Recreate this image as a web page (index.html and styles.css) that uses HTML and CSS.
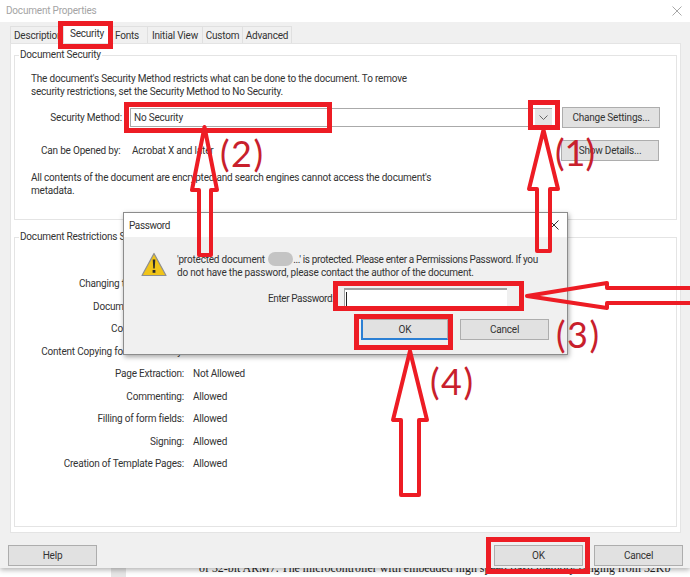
FILE: index.html
```html
<!DOCTYPE html>
<html lang="en">
<head>
<meta charset="utf-8">
<title>Document Properties</title>
<link rel="stylesheet" href="styles.css">
</head>
<body>
<div class="backdrop-text">of 32-bit ARM7. The microcontroller with embedded high speed flash memory ranging from 32Kb</div>
<div class="backdrop-bar"></div>
<main class="window">
  <header class="titlebar">
    <span class="title">Document Properties</span>
    <svg class="close" width="10" height="10" viewBox="0 0 10 10"><path d="M.5.5l9 9M9.5.5l-9 9" stroke="#a8a8a8" fill="none"/></svg>
  </header>
  <div class="body">
    <nav class="tabs">
      <span class="tab t-desc">Description</span>
      <span class="tab active">Security</span>
      <span class="tab t-fonts">Fonts</span>
      <span class="tab t-init">Initial View</span>
      <span class="tab t-cust">Custom</span>
      <span class="tab t-adv">Advanced</span>
    </nav>
    <section class="panel">
      <fieldset class="group sec">
        <legend>Document Security</legend>
        <div class="sec-inner">
          <p class="para">The document's Security Method restricts what can be done to the document. To remove<br>security restrictions, set the Security Method to No Security.</p>
          <div class="method-row">
            <span class="mlabel">Security Method:</span>
            <div class="select"><span>No Security</span><span class="arrowbox"><svg width="9" height="5" viewBox="0 0 9 5"><path d="M.5.5l4 4 4-4" stroke="#666" fill="none"/></svg></span></div>
            <span class="btn b-change">Change Settings...</span>
          </div>
          <div class="open-row">
            <span class="olabel">Can be Opened by:</span>
            <span class="oval">Acrobat X and later</span>
            <span class="btn b-show">Show Details...</span>
          </div>
          <p class="para p2">All contents of the document are encrypted and search engines cannot access the document's<br>metadata.</p>
        </div>
      </fieldset>
      <fieldset class="group res">
        <legend>Document Restrictions Summary</legend>
        <dl class="rows">
          <dt>Printing:</dt><dd>Allowed</dd>
          <dt>Changing the Document:</dt><dd>Not Allowed</dd>
          <dt>Document Assembly:</dt><dd>Not Allowed</dd>
          <dt>Content Copying:</dt><dd>Not Allowed</dd>
          <dt>Content Copying for Accessibility:</dt><dd>Not Allowed</dd>
          <dt>Page Extraction:</dt><dd>Not Allowed</dd>
          <dt>Commenting:</dt><dd>Allowed</dd>
          <dt>Filling of form fields:</dt><dd>Allowed</dd>
          <dt>Signing:</dt><dd>Allowed</dd>
          <dt>Creation of Template Pages:</dt><dd>Allowed</dd>
        </dl>
      </fieldset>
    </section>
    <footer class="footer">
      <span class="btn b-foot">Help</span>
      <span class="spacer"></span>
      <span class="btn b-foot">OK</span>
      <span class="btn b-foot">Cancel</span>
    </footer>
  </div>
</main>

<div class="dialog">
  <header class="dtitle">
    <span class="dname">Password</span>
    <svg class="dclose" width="10" height="10" viewBox="0 0 10 10"><path d="M.5.5l9 9M9.5.5l-9 9" stroke="#333" fill="none"/></svg>
  </header>
  <div class="dbody">
    <div class="dmsg">
      <svg class="warn" width="26" height="25" viewBox="0 0 26 25">
        <path d="M13 1.500L25 23.500H1z" fill="#f0c419" stroke="#8f8f8f" stroke-width="1.200" stroke-linejoin="round"/>
        <path d="M11.700 7.500h2.600l-.6 9h-1.400z" fill="#2b2b2b"/>
        <rect x="11.600" y="18" width="2.800" height="2.800" fill="#2b2b2b"/>
      </svg>
      <p>'protected document <span class="blur"></span><span class="tail">...' is protected. Please enter a Permissions Password. If you</span><br>do not have the password, please contact the author of the document.</p>
    </div>
    <div class="pw-row"><label>Enter Password:</label><div class="pw-input"><i class="caret"></i></div></div>
    <div class="dbtns"><span class="btn d-ok">OK</span><span class="btn d-cancel">Cancel</span></div>
  </div>
</div>

<svg class="marks" width="690" height="577" viewBox="0 0 690 577">
  <g fill="none" stroke="#ed1c24" stroke-width="5">
    <rect x="60.500" y="23.500" width="50" height="23"/>
    <rect x="126.500" y="104.500" width="203" height="26"/>
    <rect x="530.500" y="102.500" width="27" height="25"/>
    <rect x="335.500" y="283.500" width="186" height="25"/>
    <rect x="356.500" y="316.500" width="94" height="31"/>
    <rect x="488.500" y="539.500" width="99" height="32"/>
  </g>
  <g fill="none" stroke="#ed1c24" stroke-width="4" stroke-linejoin="round">
    <path d="M543.500 130L529 189H537V251H550V189H558Z"/>
    <path d="M204.500 127L192 190H199V255H211V190H217Z"/>
    <path d="M692 288H607V283L527 296L607 308V303H692"/>
    <path d="M410 351L393 420H401V495H419V420H427Z"/>
  </g>
</svg>
<span class="num n1">(1)</span>
<span class="num n2">(2)</span>
<span class="num n3">(3)</span>
<span class="num n4">(4)</span>
</body>
</html>
```
FILE: styles.css
```css
* { box-sizing: border-box; }
html, body { margin: 0; padding: 0; }
body {
  width: 690px;
  height: 577px;
  position: relative;
  overflow: hidden;
  background: #fff;
  font-family: Roboto, "Open Sans", sans-serif;
  font-size: 10px;
  letter-spacing: -.2px;
  color: #333;
}
.backdrop-text {
  position: absolute;
  left: 199px;
  top: 560px;
  font: 11.900px/16px "Liberation Serif", serif;
  letter-spacing: 0;
  color: #222;
  white-space: nowrap;
}
.backdrop-bar {
  position: absolute;
  left: 111px;
  top: 568px;
  width: 15px;
  height: 9px;
  background: #e6e6e6;
}
.window {
  position: relative;
  width: 690px;
  height: 568px;
  display: flex;
  flex-direction: column;
  box-shadow: 0 2px 5px rgba(0,0,0,.3);
}
.titlebar {
  height: 22px;
  flex: none;
  background: #fff;
  display: flex;
  align-items: center;
  justify-content: space-between;
  padding: 0 8px 1px 6px;
}
.title { color: #a4a4a4; }
.body {
  flex: 1;
  min-height: 0;
  background: #f0f0f0;
  display: flex;
  flex-direction: column;
  padding: 4px 7px 0 8px;
}
.tabs {
  display: flex;
  height: 17px;
  flex: none;
  padding-left: 2px;
}
.tab {
  height: 17px;
  line-height: 17px;
  background: #f0f0f0;
  border: 1px solid #e0e0e0;
  border-bottom: none;
  margin-right: -1px;
  white-space: nowrap;
  text-align: center;
}
.tab.active { background: #fff; width: 48px; height: 19px; margin-top: -2px; }
.t-desc { width: 54px; text-align: left; padding-left: 3px; overflow: hidden; }
.t-fonts { width: 38px; text-align: left; padding-left: 4px; }
.t-init { width: 56px; }
.t-cust { width: 41px; }
.t-adv { width: 50px; }
.panel {
  flex: none;
  height: 490px;
  margin: 0 2px 0 2px;
  background: #fff;
  border: 1px solid #e4e4e4;
  padding: 0 3px;
  display: flex;
  flex-direction: column;
}
.group {
  margin: 0;
  padding: 0;
  border: 1px solid #e4e4e4;
  min-width: 0;
}
.group legend { margin-left: 4px; padding: 0 1px; color: #333; line-height: 14px; }
.sec { height: 172px; margin-top: 4px; flex: none; }
.sec-inner { padding: 10px 0 0 16px; }
.res { flex: 1; margin-top: 10px; margin-bottom: 5px; }
.para { margin: 0; line-height: 13px; }
.method-row, .open-row { display: flex; align-items: center; height: 21px; }
.method-row { margin-top: 9px; }
.mlabel { width: 99px; padding-right: 8px; text-align: right; white-space: nowrap; }
.select {
  width: 422px;
  height: 19px;
  border: 1px solid #aaa;
  border-width: 1px 0 1px 1px;
  background: #fff;
  display: flex;
  align-items: center;
  justify-content: space-between;
  padding-left: 3px;
}
.arrowbox {
  width: 17px;
  height: 18px;
  background: #e4e4e4;
  display: flex;
  align-items: center;
  justify-content: center;
}
.btn {
  display: inline-flex;
  align-items: center;
  justify-content: center;
  background: #e1e1e1;
  border: 1px solid #adadad;
  white-space: nowrap;
  color: #333;
}
.b-change { width: 98px; height: 21px; margin-left: 10px; }
.b-show { width: 98px; height: 21px; margin-left: auto; margin-right: 17px; }
.open-row { margin-top: 12px; }
.olabel { width: 101px; padding-left: 10px; white-space: nowrap; }
.oval { white-space: nowrap; }
.p2 { margin-top: 10px; }
.rows {
  margin: 0;
  padding: 6px 0 0 0;
  display: grid;
  grid-template-columns: 169px 1fr;
  column-gap: 9px;
  grid-auto-rows: 22.500px;
  align-items: center;
}
.rows dt { text-align: right; white-space: nowrap; }
.rows dd { margin: 0; }
.footer {
  flex: 1;
  display: flex;
  align-items: flex-start;
  gap: 11px;
  padding-top: 12px;
}
.spacer { flex: 1; }
.b-foot { width: 89px; height: 21px; }
.dialog {
  position: absolute;
  left: 123px;
  top: 212px;
  width: 445px;
  height: 143px;
  background: #f0f0f0;
  border: 1px solid #8c8c8c;
  box-shadow: 1px 2px 5px rgba(0,0,0,.35);
  display: flex;
  flex-direction: column;
}
.dtitle {
  height: 24px;
  flex: none;
  background: #fff;
  display: flex;
  align-items: center;
  justify-content: space-between;
  padding: 0 8px 0 5px;
}
.dname { letter-spacing: -.4px; }
.dbody { flex: 1; display: flex; flex-direction: column; }
.dmsg { display: flex; padding: 15px 0 0 17px; gap: 10px; }
.dmsg p { margin: 0; line-height: 13px; white-space: nowrap; }
.warn { flex: none; }
.blur {
  display: inline-block;
  width: 25px;
  height: 14px;
  margin-left: 1px;
  border-radius: 7px;
  background: #c4c4c4;
  vertical-align: -3px;
}
.tail { letter-spacing: -.35px; }
.pw-row { display: flex; align-items: center; margin-top: 9px; padding-left: 144px; }
.pw-row label { white-space: nowrap; width: 76px; letter-spacing: -.4px; }
.pw-input {
  width: 163px;
  height: 20px;
  background: #fff;
  border-top: 2px solid #a0a0a0;
  border-left: 1px solid #a0a0a0;
  display: flex;
  align-items: center;
  padding-left: 1px;
}
.caret { display: block; width: 1px; height: 14px; background: #222; }
.dbtns { display: flex; margin-top: 11px; padding-left: 237px; gap: 12px; }
.d-ok { width: 87px; height: 21px; border-color: #adadad #adadad #2b7fd4 #2b7fd4; border-width: 1px 1px 2px 2px; }
.d-cancel { width: 89px; height: 21px; }
.marks { position: absolute; left: 0; top: 0; pointer-events: none; }
.num {
  position: absolute;
  font-family: "Lato", "Open Sans", sans-serif;
  font-size: 36px;
  line-height: 36px;
  letter-spacing: 1.500px;
  color: #c8202c;
  white-space: nowrap;
}
.n1 { left: 555px; top: 134px; letter-spacing: 0; }
.n2 { left: 220px; top: 135px; }
.n3 { left: 556px; top: 316px; }
.n4 { left: 430px; top: 363px; }
```
